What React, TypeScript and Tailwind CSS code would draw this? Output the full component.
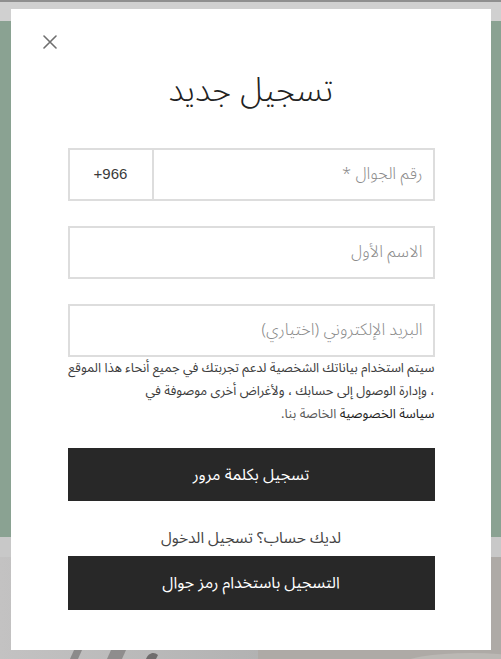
import React from "react";

const ar = "font-['Noto_Sans_Arabic','DejaVu_Sans',sans-serif]";

function CloseIcon() {
  return (
    <svg width="14" height="14" viewBox="0 0 14 14" fill="none">
      <path d="M1 1L13 13M13 1L1 13" stroke="#6f6f6f" strokeWidth="1.6" strokeLinecap="round" />
    </svg>
  );
}

export default function App() {
  return (
    <div className="relative w-[501px] h-[659px] overflow-hidden">
      {/* dimmed page behind the modal */}
      <div className="h-[21px] bg-[#d0d0d0] border-t-2 border-[#8f8f8f]" />
      <div className="h-[516px] bg-[#8aa292]" />
      <div className="h-[20px] bg-[#c8c8c8]" />
      <div className="flex h-[102px]">
        <div className="relative w-[258px] bg-gradient-to-r from-[#c3c2c2] to-[#b2b2b2]">
          <svg className="absolute left-0 bottom-0" width="258" height="14" viewBox="0 0 258 14">
            <path d="M70 14L74 5L82 5L78 14Z" fill="#8c8a8a" />
            <path d="M107 14L111 5L126 5L122 14Z" fill="#8f8d8d" />
            <path d="M146 14C148 8 154 6 158 10L156 14Z" fill="#6f6d6d" />
          </svg>
        </div>
        <div className="relative flex-1 bg-[#aeaaa6]">
          <svg className="absolute right-0 bottom-0" width="110" height="14" viewBox="0 0 110 14">
            <ellipse cx="80" cy="20" rx="70" ry="12" fill="#bbb8b4" />
          </svg>
        </div>
      </div>

      {/* modal */}
      <div
        dir="rtl"
        className={`absolute left-[11px] top-[9px] w-[480px] h-[641px] bg-white flex flex-col items-center ${ar}`}
      >
        <button className="absolute left-[32px] top-[26px] w-[14px] h-[14px] flex items-center justify-center">
          <CloseIcon />
        </button>

        <h2 className="mt-[62px] h-[40px] leading-[40px] text-[33px] font-light text-[#222]">تسجيل جديد</h2>

        <div className="w-[367px] mt-[37px] flex flex-col">
          <div className="h-[53px] border-2 border-[#dddddd] flex">
            <div className="flex-1 flex items-center pr-[10px] text-[16.5px] text-[#8b8b8b] font-light">
              رقم الجوال *
            </div>
            <div
              dir="ltr"
              className="w-[84px] border-r-2 border-[#dddddd] flex items-center justify-center text-[15px] text-[#3a3a3a] font-['Liberation_Sans',sans-serif]"
            >
              +966
            </div>
          </div>

          <div className="h-[53px] mt-[25px] border-2 border-[#dddddd] flex items-center pr-[10px] text-[16.5px] text-[#8b8b8b] font-light">
            الاسم الأول
          </div>

          <div className="h-[53px] mt-[25px] border-2 border-[#dddddd] flex items-center pr-[10px] text-[16.5px] text-[#8b8b8b] font-light">
            البريد الإلكتروني (اختياري)
          </div>

          <div className="text-[13px] leading-[23px] text-[#3d3d3d] whitespace-nowrap">
            <div>سيتم استخدام بياناتك الشخصية لدعم تجربتك في جميع أنحاء هذا الموقع</div>
            <div>، وإدارة الوصول إلى حسابك ، ولأغراض أخرى موصوفة في</div>
            <div>
              <span className="text-[#1f1f1f]">سياسة الخصوصية</span>{" "}
              <span className="text-[#5a5a5a]">الخاصة بنا.</span>
            </div>
          </div>

          <button className="mt-[22px] h-[53px] bg-[#282828] text-white text-[16px] font-normal flex items-center justify-center">
            تسجيل بكلمة مرور
          </button>

          <div className="mt-[25px] h-[24px] leading-[24px] text-center text-[15.5px] text-[#444]">
            لديك حساب؟ تسجيل الدخول
          </div>

          <button className="mt-[6px] h-[54px] bg-[#282828] text-white text-[16px] font-normal flex items-center justify-center">
            التسجيل باستخدام رمز جوال
          </button>
        </div>
      </div>
    </div>
  );
}
